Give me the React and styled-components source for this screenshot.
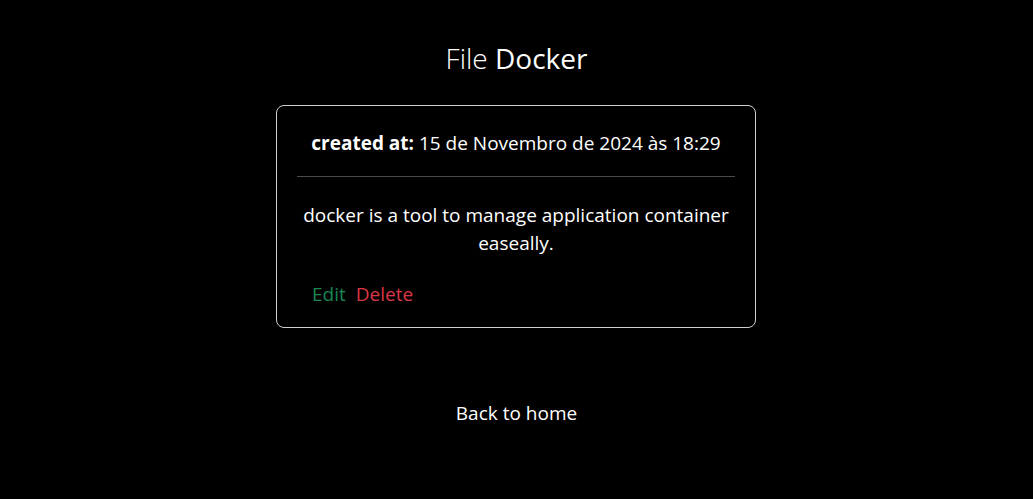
import styled, { createGlobalStyle } from "styled-components";

const GlobalStyle = createGlobalStyle`
  html, body {
    margin: 0;
    background: #000;
    color: #fff;
    font-family: "Open Sans", "Noto Sans", sans-serif;
  }
`;

const note = {
  title: "Docker",
  createdAt: "15 de Novembro de 2024 às 18:29",
  content: "docker is a tool to manage application container easeally.",
};

export default function App() {
  return (
    <>
      <GlobalStyle />
      <Page>
        <Title>
          <Light>File</Light> {note.title}
        </Title>
        <Card>
          <CardHeader>
            <strong>created at:</strong> {note.createdAt}
          </CardHeader>
          <Divider />
          <Content>{note.content}</Content>
          <Actions>
            <ActionLink href="#" color="#198754">
              Edit
            </ActionLink>
            <ActionLink href="#" color="#dc3545">
              Delete
            </ActionLink>
          </Actions>
        </Card>
        <BackLink href="#">Back to home</BackLink>
      </Page>
    </>
  );
}

const Page = styled.div`
  display: flex;
  flex-direction: column;
  align-items: center;
  padding-top: 42px;
`;

const Title = styled.h3`
  margin: 0;
  font-size: 28px;
  line-height: 33px;
  font-weight: 400;
`;

const Light = styled.span`
  font-weight: 300;
`;

const Card = styled.div`
  margin: 30px 1px 0 0;
  width: 480px;
  box-sizing: border-box;
  border: 1px solid #d0d0d0;
  border-radius: 8px;
  padding: 23px 20px 19px;
  font-size: 19px;
  line-height: 28px;
`;

const CardHeader = styled.div`
  text-align: center;
  strong {
    font-weight: 700;
  }
`;

const Divider = styled.hr`
  margin: 19px 0 24px;
  border: 0;
  border-top: 1px solid #4a4a4a;
`;

const Content = styled.p`
  margin: 0;
  text-align: center;
`;

const Actions = styled.div`
  display: flex;
  gap: 10px;
  margin-top: 23px;
  padding-left: 15px;
`;

const ActionLink = styled.a`
  color: ${(props) => props.color};
  text-decoration: none;
`;

const BackLink = styled.a`
  margin-top: 71px;
  color: #fff;
  text-decoration: none;
  font-size: 19px;
  line-height: 28px;
`;
